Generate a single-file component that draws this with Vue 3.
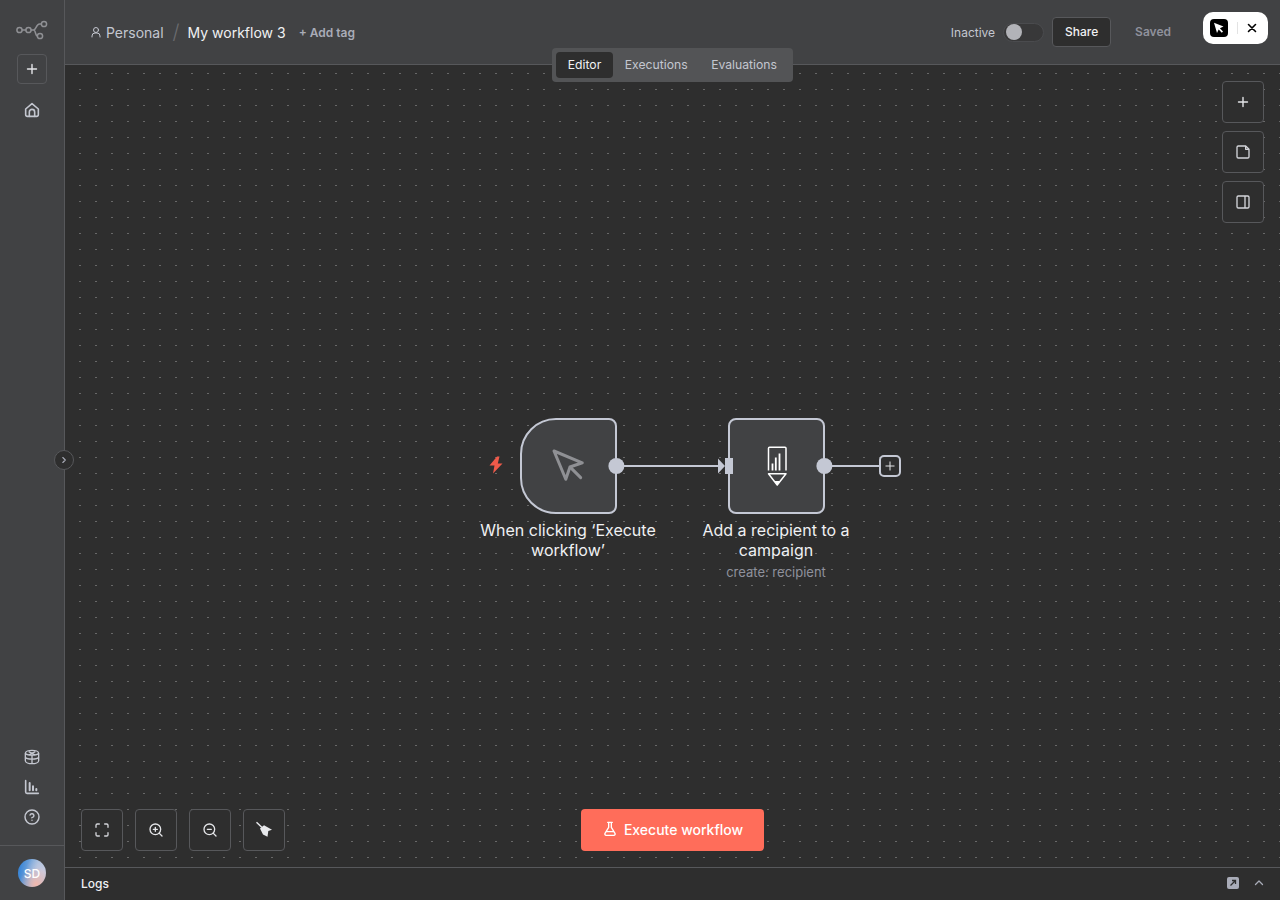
<script setup>
const tabs = ['Editor', 'Executions', 'Evaluations']
</script>

<template>
  <div class="app">
    <aside class="sidebar">
      <svg class="logo" width="32" height="20" viewBox="0 0 32 20" fill="none" stroke="#8f9094" stroke-width="1.5">
        <circle cx="3.5" cy="10" r="2.6" />
        <circle cx="12.5" cy="10" r="2.6" />
        <circle cx="28" cy="4" r="2.6" />
        <circle cx="24" cy="16" r="2.6" />
        <path d="M6 10h4M15 10h2.5c3 0 2.5-6 6-6h2M17.5 10c2.5 0 1.5 6 4 6" />
      </svg>
      <button class="side-add">
        <svg width="12" height="12" viewBox="0 0 12 12" stroke="#e4e5e8" stroke-width="1.4" stroke-linecap="round"><path d="M6 1.5v9M1.5 6h9" /></svg>
      </button>
      <svg class="side-icon home" width="16" height="16" viewBox="0 0 24 24" fill="none" stroke="#c4c7d0" stroke-width="2.4" stroke-linecap="round" stroke-linejoin="round">
        <path d="M2.500 10.500 12 2.500l9.500 8V19a2.500 2.500 0 0 1-2.500 2.500H5A2.500 2.500 0 0 1 2.500 19z" />
        <path d="M8 21.500V15a4 4 0 0 1 8 0v6.500" />
      </svg>

      <div class="side-bottom">
        <svg class="side-icon" width="16" height="16" viewBox="0 0 24 24" fill="none" stroke="#c4c7d0" stroke-width="2" stroke-linejoin="round">
          <path d="M12 2c5 0 10 1.800 10 4.500v11c0 2.700-5 4.500-10 4.500S2 20.200 2 17.500v-11C2 3.800 7 2 12 2z" />
          <path d="M2 6.500c2 3.500 18 3.500 20 0M2 12.500c2 3.500 18 3.500 20 0M12 9.500V22M7 4l10 5M17 4 7 9" />
        </svg>
        <svg class="side-icon" width="16" height="16" viewBox="0 0 24 24" fill="none" stroke="#c4c7d0" stroke-width="2.400" stroke-linecap="round">
          <path d="M2.500 2.500v17a2 2 0 0 0 2 2h17" />
          <path d="M8.500 6v11M13.500 11v6M18.500 15v2" stroke-width="3" />
        </svg>
        <svg class="side-icon" width="16" height="16" viewBox="0 0 24 24" fill="none" stroke="#c4c7d0" stroke-width="2.200" stroke-linecap="round" stroke-linejoin="round">
          <circle cx="12" cy="12" r="10.500" />
          <path d="M9.100 9a3 3 0 0 1 5.800 1c0 2-3 3-3 3M12 17h.01" />
        </svg>
      </div>
      <div class="user">
        <div class="avatar">SD</div>
      </div>
      <button class="collapse">
        <svg width="10" height="10" viewBox="0 0 10 10" fill="none" stroke="#a9acb8" stroke-width="1.100" stroke-linecap="round" stroke-linejoin="round"><path d="M3.800 2.500 6.300 5 3.800 7.500" /></svg>
      </button>
    </aside>

    <div class="main">
      <header class="header">
        <svg class="person" width="12" height="12" viewBox="0 0 24 24" fill="none" stroke="#c4c7d0" stroke-width="2" stroke-linecap="round">
          <circle cx="12" cy="8" r="5" />
          <path d="M4 22v-2a6 6 0 0 1 6-6h4a6 6 0 0 1 6 6v2" />
        </svg>
        <span class="project">Personal</span>
        <span class="slash">/</span>
        <span class="name">My workflow 3</span>
        <span class="add-tag">+ Add tag</span>

        <div class="actions">
          <span class="status">Inactive</span>
          <span class="toggle"><span class="knob"></span></span>
          <button class="share">Share</button>
          <span class="saved">Saved</span>
        </div>
      </header>

      <div class="tabs">
        <span v-for="t in tabs" :key="t" class="tab" :class="{ active: t === 'Editor' }">{{ t }}</span>
      </div>

      <div class="ext">
        <span class="ext-logo">
          <svg width="14" height="14" viewBox="0 0 14 14" fill="#fff"><path d="M2 1.800 11.500 5.500 7.900 7.300 11 10.500 9.800 11.700 6.700 8.500 5 12z" /></svg>
        </span>
        <span class="ext-sep"></span>
        <svg width="10" height="10" viewBox="0 0 10 10" stroke="#000" stroke-width="1.600" stroke-linecap="round"><path d="M1.500 1.500l7 7M8.500 1.500l-7 7" /></svg>
      </div>

      <section class="canvas">
        <svg class="dots" width="100%" height="100%">
          <defs>
            <pattern id="dots" x="14" y="8" width="16" height="16" patternUnits="userSpaceOnUse">
              <rect width="2" height="1" fill="#686868" />
            </pattern>
          </defs>
          <rect width="100%" height="100%" fill="url(#dots)" />
        </svg>

        <svg class="edges" width="1215" height="802" fill="none">
          <path d="M551 401h103M767 401h48" stroke="#c4c8d4" stroke-width="2" />
          <path d="M653 393.500 660 401 653 408.500z" fill="#c4c8d4" />
          <rect x="660" y="393" width="8" height="16" fill="#c4c8d4" />
          <circle cx="551.400" cy="401" r="8" fill="#c4c8d4" />
          <circle cx="759.400" cy="401" r="8" fill="#c4c8d4" />
          <rect x="815" y="391" width="20" height="20" rx="4" fill="#2e2e2e" stroke="#c4c8d4" stroke-width="2" />
          <path d="M825 396.500v9M820.500 401h9" stroke="#e4e5e8" stroke-width="1" />
        </svg>

        <svg class="bolt" width="16" height="18" viewBox="0 0 16 18" fill="#ef5a4a">
          <path d="M9 .5 1.500 9.500H6.500L5 17.500 14.500 7.500H9.800L11.500.5z" />
        </svg>

        <div class="node trigger">
          <svg width="40" height="40" viewBox="0 0 24 24" fill="none" stroke="#8f9094" stroke-width="1.800" stroke-linecap="round" stroke-linejoin="round">
            <path d="M3 3l7.070 16.970 2.510-7.390 7.390-2.510L3 3z" />
            <path d="M13 13l6 6" />
          </svg>
        </div>
        <div class="node-label first">When clicking ‘Execute workflow’</div>

        <div class="node action">
          <svg width="22" height="42" viewBox="0 0 22 42" fill="none" stroke="#fff" stroke-width="1.500">
            <path d="M2.500 25.500V3.200a1 1 0 0 1 1-1h15.500a1 1 0 0 1 1 1V25.500" />
            <path d="M6.500 25.500v-7M9.800 25.500V12.500M13.500 25.500V8.500" stroke-width="1.800" />
            <path d="M2.500 28.800H20L11.200 40z" stroke-linejoin="round" />
            <path d="M8.200 36h6L11.200 40.500z" fill="#fff" stroke="none" />
          </svg>
        </div>
        <div class="node-label second">
          Add a recipient to a campaign
          <small>create: recipient</small>
        </div>

        <div class="tools right">
          <button class="tool">
            <svg width="12" height="12" viewBox="0 0 12 12" stroke="#e4e5e8" stroke-width="1.400" stroke-linecap="round"><path d="M6 1.500v9M1.500 6h9" /></svg>
          </button>
          <button class="tool">
            <svg width="16" height="16" viewBox="0 0 24 24" fill="none" stroke="#d4d5da" stroke-width="2" stroke-linejoin="round">
              <path d="M5 3h11l5 5v11a2 2 0 0 1-2 2H5a2 2 0 0 1-2-2V5a2 2 0 0 1 2-2z" />
              <path d="M16 3v5h5" />
            </svg>
          </button>
          <button class="tool">
            <svg width="16" height="16" viewBox="0 0 24 24" fill="none" stroke="#d4d5da" stroke-width="2">
              <rect x="3" y="3" width="18" height="18" rx="2" />
              <path d="M15 3v18" />
            </svg>
          </button>
        </div>

        <div class="tools bottom">
          <button class="tool">
            <svg width="16" height="16" viewBox="0 0 24 24" fill="none" stroke="#d4d5da" stroke-width="2" stroke-linecap="round">
              <path d="M3 8V5a2 2 0 0 1 2-2h3M16 3h3a2 2 0 0 1 2 2v3M21 16v3a2 2 0 0 1-2 2h-3M8 21H5a2 2 0 0 1-2-2v-3" />
            </svg>
          </button>
          <button class="tool">
            <svg width="16" height="16" viewBox="0 0 24 24" fill="none" stroke="#e4e5e8" stroke-width="2" stroke-linecap="round">
              <circle cx="11" cy="11" r="8" />
              <path d="m21 21-4.300-4.300M11 8v6M8 11h6" />
            </svg>
          </button>
          <button class="tool">
            <svg width="16" height="16" viewBox="0 0 24 24" fill="none" stroke="#e4e5e8" stroke-width="2" stroke-linecap="round">
              <circle cx="11" cy="11" r="8" />
              <path d="m21 21-4.300-4.300M8 11h6" />
            </svg>
          </button>
          <button class="tool">
            <svg width="18" height="18" viewBox="0 0 18 18" fill="#e8e9ec">
              <path d="M1 1.700 2 .8 7.500 6l-1 1z" />
              <path d="M5 7.500 9 4.300 17 8.800 13.300 10 12.500 15.800 8 13.500z" />
            </svg>
          </button>
        </div>

        <button class="execute">
          <svg width="16" height="16" viewBox="0 0 24 24" fill="none" stroke="#fff" stroke-width="2" stroke-linecap="round" stroke-linejoin="round">
            <path d="M10 2v7.500L4.500 18.500A2 2 0 0 0 6.200 21.500h11.600a2 2 0 0 0 1.700-3L14 9.500V2M8.500 2h7M7 16h10" />
          </svg>
          Execute workflow
        </button>
      </section>

      <footer class="logs">
        <span>Logs</span>
        <div class="logs-icons">
          <svg width="14" height="14" viewBox="0 0 14 14" fill="none">
            <rect x="1" y="1" width="12" height="12" rx="2" fill="#a9acb8" />
            <path d="M4.500 9.500 9.500 4.500M6 4.500h3.500V8" stroke="#2e2e2e" stroke-width="1.300" />
          </svg>
          <svg width="12" height="12" viewBox="0 0 12 12" fill="none" stroke="#a9acb8" stroke-width="1.300" stroke-linecap="round" stroke-linejoin="round"><path d="M2.500 7.500 6 4l3.500 3.500" /></svg>
        </div>
      </footer>
    </div>
  </div>
</template>

<style scoped>
.app {
  display: flex;
  width: 1280px;
  height: 900px;
  overflow: hidden;
  font-family: Inter, "Liberation Sans", sans-serif;
  background: #2e2e2e;
  color: #f0f1f3;
}

button {
  font-family: inherit;
  cursor: pointer;
}

/* Sidebar */

.sidebar {
  position: relative;
  z-index: 3;
  flex: none;
  width: 65px;
  box-sizing: border-box;
  display: flex;
  flex-direction: column;
  align-items: center;
  background: #414244;
  border-right: 1px solid #57585b;
}

.logo {
  margin-top: 20px;
}

.side-add {
  width: 30px;
  height: 30px;
  margin-top: 14px;
  padding: 0;
  display: flex;
  align-items: center;
  justify-content: center;
  background: transparent;
  border: 1px solid #57585b;
  border-radius: 4px;
}

.home {
  margin-top: 18px;
}

.side-icon {
  display: block;
}

.side-bottom {
  margin-top: auto;
  display: flex;
  flex-direction: column;
  gap: 14px;
  padding-bottom: 20px;
}

.user {
  width: 100%;
  height: 55px;
  box-sizing: border-box;
  display: flex;
  align-items: center;
  justify-content: center;
  border-top: 1px solid #57585b;
}

.avatar {
  width: 28px;
  height: 28px;
  border-radius: 50%;
  display: flex;
  align-items: center;
  justify-content: center;
  font-size: 12px;
  font-weight: 500;
  color: #fff;
  background:
    radial-gradient(circle at 65% 90%, #f2b8ad 0, rgba(242, 184, 173, 0) 55%),
    radial-gradient(circle at 90% 45%, #c9cbe0 0, rgba(201, 203, 224, 0) 60%),
    linear-gradient(100deg, #3b86d6 10%, #a3bede 65%);
}

.collapse {
  position: absolute;
  left: 54px;
  top: 450px;
  width: 20px;
  height: 20px;
  padding: 0;
  display: flex;
  align-items: center;
  justify-content: center;
  background: #2e2e2e;
  border: 1px solid #57585b;
  border-radius: 50%;
}

/* Header */

.main {
  position: relative;
  flex: 1;
  min-width: 0;
  display: flex;
  flex-direction: column;
}

.header {
  flex: none;
  height: 65px;
  box-sizing: border-box;
  padding: 0 0 0 25px;
  display: flex;
  align-items: center;
  background: #414244;
  border-bottom: 1px solid #57585b;
}

.person {
  margin-right: 4px;
}

.project {
  font-size: 14px;
  color: #c4c7d0;
}

.slash {
  margin: 0 8px 0 9px;
  font-size: 20px;
  font-weight: 300;
  color: #6b6c70;
}

.name {
  font-size: 14px;
  color: #f0f1f3;
}

.add-tag {
  margin-left: 13px;
  font-size: 12px;
  font-weight: 600;
  color: #a9acb8;
}

.actions {
  margin-left: auto;
  margin-right: 109px;
  display: flex;
  align-items: center;
}

.status {
  font-size: 12px;
  color: #c4c7d0;
}

.toggle {
  width: 41px;
  height: 19px;
  margin-left: 8px;
  box-sizing: border-box;
  padding: 1px;
  display: flex;
  align-items: center;
  background: #383839;
  border: 1px solid #4a4b4e;
  border-radius: 10px;
}

.knob {
  width: 16px;
  height: 16px;
  margin-left: 1px;
  background: #b2b3b8;
  border-radius: 50%;
}

.share {
  width: 59px;
  height: 30px;
  margin-left: 8px;
  margin-top: -1px;
  padding: 0 0 1px;
  font-size: 12px;
  font-weight: 500;
  color: #f0f1f3;
  background: #2e2e2e;
  border: 1px solid #57585b;
  border-radius: 4px;
}

.saved {
  margin-left: 24px;
  margin-top: -2px;
  font-size: 12px;
  font-weight: 600;
  color: #8f919c;
}

/* Tabs over the header edge */

.tabs {
  position: absolute;
  z-index: 2;
  left: 487px;
  top: 48px;
  height: 34px;
  box-sizing: border-box;
  padding: 4px;
  display: flex;
  background: #535456;
  border-radius: 4px;
}

.tab {
  padding: 0 11.750px;
  line-height: 25px;
  font-size: 12.200px;
  color: #c4c7d0;
  border-radius: 4px;
}

.tab.active {
  color: #f0f1f3;
  background: #2e2e2e;
}

.ext {
  position: absolute;
  z-index: 2;
  right: 12px;
  top: 12px;
  width: 65px;
  height: 32px;
  box-sizing: border-box;
  padding: 0 11px 0 7px;
  display: flex;
  align-items: center;
  justify-content: space-between;
  background: #fff;
  border-radius: 10px;
}

.ext-logo {
  width: 18px;
  height: 18px;
  display: flex;
  align-items: center;
  justify-content: center;
  background: #000;
  border-radius: 4px;
}

.ext-sep {
  width: 1px;
  height: 12px;
  background: #e3e3e3;
}

/* Canvas */

.canvas {
  position: relative;
  flex: 1;
  min-height: 0;
  background: #2e2e2e;
}

.dots,
.edges {
  position: absolute;
  left: 0;
  top: 0;
}

.bolt {
  position: absolute;
  left: 423px;
  top: 391px;
}

.node {
  position: absolute;
  top: 353px;
  width: 96px;
  height: 96px;
  box-sizing: border-box;
  display: flex;
  align-items: center;
  justify-content: center;
  background: #414244;
  border: 2px solid #c4c8d4;
  border-radius: 8px;
}

.trigger {
  left: 455px;
  border-radius: 36px 8px 8px 36px;
  width: 97px;
}

.action {
  left: 663px;
  width: 97px;
}

.node-label {
  position: absolute;
  top: 455px;
  width: 190px;
  font-size: 16px;
  line-height: 20px;
  font-weight: 400;
  text-align: center;
  color: #f0f1f3;
}

.node-label.first {
  left: 408px;
}

.node-label.second {
  left: 616px;
}

.node-label small {
  display: block;
  margin-top: 2px;
  font-size: 13px;
  line-height: 21px;
  color: #8f919c;
}

.edges {
  z-index: 1;
}

.tools {
  position: absolute;
  display: flex;
}

.tools.right {
  right: 16px;
  top: 16px;
  flex-direction: column;
  gap: 8px;
}

.tools.bottom {
  left: 16px;
  bottom: 16px;
  gap: 12px;
}

.tool {
  width: 42px;
  height: 42px;
  padding: 0;
  display: flex;
  align-items: center;
  justify-content: center;
  background: #2e2e2e;
  border: 1px solid #57585b;
  border-radius: 4px;
}

.execute {
  position: absolute;
  left: 516px;
  bottom: 16px;
  width: 183px;
  height: 42px;
  padding: 0 0 2px;
  display: flex;
  align-items: center;
  justify-content: center;
  gap: 6px;
  font-size: 14px;
  font-weight: 500;
  color: #fff;
  background: #ff6d5a;
  border: none;
  border-radius: 4px;
}

/* Logs */

.logs {
  flex: none;
  height: 33px;
  box-sizing: border-box;
  padding: 0 15px 2px 16px;
  display: flex;
  align-items: center;
  justify-content: space-between;
  font-size: 12px;
  font-weight: 500;
  color: #f0f1f3;
  background: #2e2e2e;
  border-top: 1px solid #57585b;
}

.logs-icons {
  display: flex;
  align-items: center;
  gap: 13px;
}

.logs-icons svg {
  display: block;
}
</style>
